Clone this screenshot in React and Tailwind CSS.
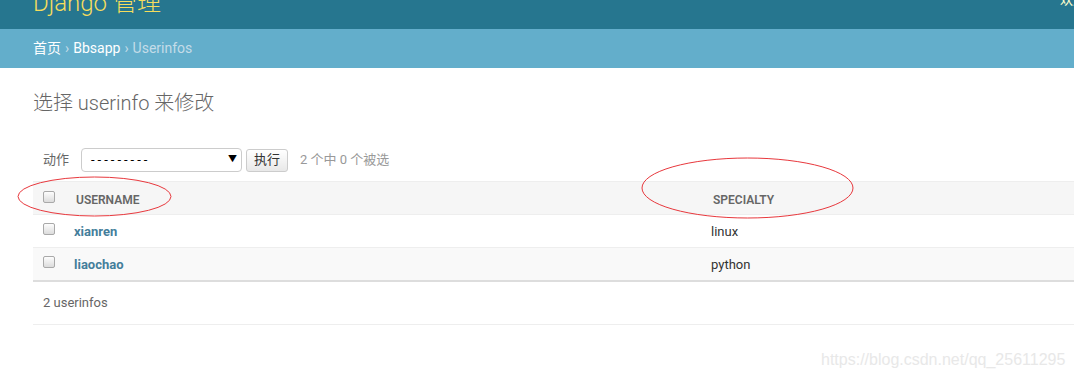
import React from 'react'

const font = { fontFamily: 'Roboto, "Noto Sans CJK SC", sans-serif' }

function Checkbox() {
  return (
    <span className="inline-block w-[12px] h-[12px] rounded-[2px] border border-[#a9a9a9] bg-gradient-to-b from-[#fdfdfd] to-[#dcdcdc]" />
  )
}

export default function App() {
  const rows = [
    { username: 'xianren', specialty: 'linux' },
    { username: 'liaochao', specialty: 'python' }
  ]

  return (
    <div
      className="relative w-[1074px] h-[378px] overflow-hidden bg-white text-[#333]"
      style={font}
    >
      {/* header */}
      <div className="h-[29px] bg-[#26768f] relative">
        <div className="absolute left-[33px] top-[-12px] text-[24px] leading-[30px] font-light text-[#f5dd5d] whitespace-nowrap">
          Django 管理
        </div>
        <div className="absolute left-[1060px] top-[-10px] text-[13px] text-[#ffc] leading-[20px] whitespace-nowrap">
          欢迎
        </div>
      </div>

      {/* breadcrumbs */}
      <div className="h-[39px] bg-[#63aecb] flex items-center pl-[33px] text-[14px] text-white">
        <span>首页</span>
        <span className="mx-[4px] text-[#c4dce8]">›</span>
        <span>Bbsapp</span>
        <span className="mx-[4px] text-[#c4dce8]">›</span>
        <span className="text-[#c4dce8]">Userinfos</span>
      </div>

      {/* content */}
      <div className="pl-[33px] pt-[21px]">
        <h1 className="text-[20px] leading-[28px] font-light text-[#666]">
          选择 userinfo 来修改
        </h1>

        <div className="mt-[29px] flex items-center h-[28px] pl-[10px] text-[13px] text-[#666]">
          <span>动作</span>
          <div className="ml-[12px] w-[161px] h-[24px] border border-[#ccc] rounded-[4px] flex items-center justify-between pl-[9px] pr-[4px] text-black text-[13px]">
            <span className="tracking-[3px]">---------</span>
            <span className="text-[9px]">▼</span>
          </div>
          <div className="ml-[4px] h-[23px] px-[7px] border border-[#ccc] rounded-[3px] bg-gradient-to-b from-white to-[#e8e8e8] text-[#333] text-[13px] flex items-center">
            执行
          </div>
          <span className="ml-[12px] text-[#999]">2 个中 0 个被选</span>
        </div>

        <table className="mt-[7px] w-[1060px] border-collapse text-[13px]">
          <thead>
            <tr className="bg-[#f6f6f6] border-t border-b border-[#eee] h-[33px]">
              <th className="w-[43px] pl-[10px] text-left align-middle pt-[1px]">
                <Checkbox />
              </th>
              <th className="w-[637px] text-left text-[12px] font-semibold text-[#666] uppercase pt-[4px]">
                Username
              </th>
              <th className="text-left text-[12px] font-semibold text-[#666] uppercase pt-[4px]">
                Specialty
              </th>
            </tr>
          </thead>
          <tbody>
            {rows.map((item, index) => (
              <tr
                key={index}
                className={`h-[33px] border-b ${
                  index === rows.length - 1
                    ? 'border-[#ddd] border-b-2 bg-[#f9f9f9]'
                    : 'border-[#eee] bg-white'
                }`}
              >
                <td className="pl-[10px] align-middle">
                  <Checkbox />
                </td>
                <td className="font-bold text-[#447e9b] pt-[2px] -translate-x-[2px]">
                  {item.username}
                </td>
                <td className="text-[#333] pt-[2px] -translate-x-[2px]">{item.specialty}</td>
              </tr>
            ))}
          </tbody>
        </table>

        <div className="w-[1060px] h-[43px] border-b border-[#eee] flex items-center pl-[10px] text-[13px] text-[#666]">
          2 userinfos
        </div>
      </div>

      {/* annotation ellipses */}
      <svg
        className="absolute left-0 top-0 pointer-events-none"
        width="1074"
        height="378"
      >
        <ellipse cx="94.5" cy="196.5" rx="76.5" ry="19.5" fill="none" stroke="#e8383d" strokeWidth="1" />
        <ellipse cx="747.5" cy="188" rx="105.5" ry="30" fill="none" stroke="#e8383d" strokeWidth="1" />
      </svg>

      {/* watermark */}
      <div
        className="absolute left-[821px] top-[348px] text-[16px] text-[#e8e8e8] whitespace-nowrap"
        style={{ fontFamily: '"Liberation Sans", Arial, sans-serif' }}
      >
        https://blog.csdn.net/qq_25611295
      </div>
    </div>
  )
}
